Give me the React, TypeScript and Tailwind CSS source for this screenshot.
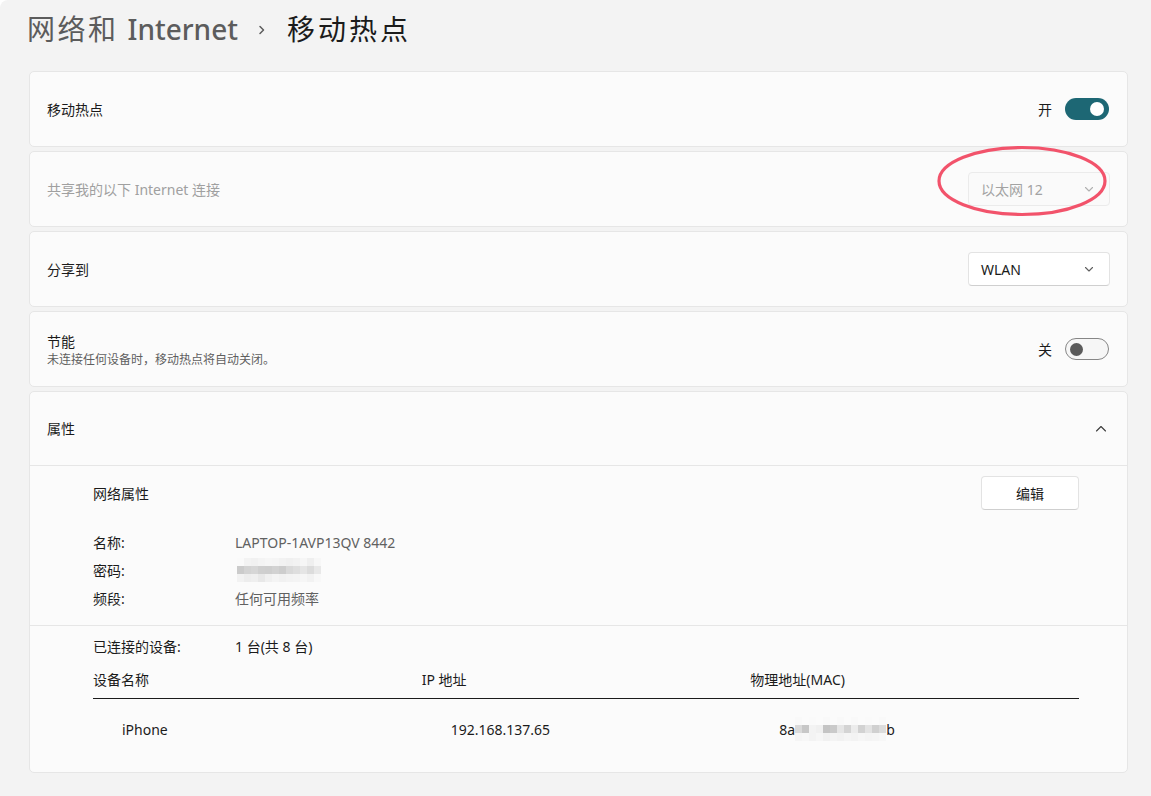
import React from 'react';

const font = { fontFamily: '"Segoe UI", "Noto Sans", "Noto Sans CJK SC", sans-serif' };

function Chevron({ up = false, className = '' }: { up?: boolean; className?: string }) {
  return (
    <svg width="12" height="12" viewBox="0 0 12 12" className={className} fill="none">
      <path
        d={up ? 'M1.5 8L6 3.5L10.5 8' : 'M2.5 4.5L6 8L9.5 4.5'}
        stroke="currentColor"
        strokeWidth="1.1"
        strokeLinecap="round"
        strokeLinejoin="round"
      />
    </svg>
  );
}

function Toggle({ on }: { on: boolean }) {
  if (on) {
    return (
      <div className="w-[44px] h-[22px] rounded-full bg-[#1d6774] flex items-center justify-end pr-[5px]">
        <div className="w-[14px] h-[14px] rounded-full bg-white" />
      </div>
    );
  }
  return (
    <div className="w-[44px] h-[22px] rounded-full border border-[#868686] bg-[#f6f6f6] flex items-center pl-[4px]">
      <div className="w-[13px] h-[13px] rounded-full bg-[#5a5a5a]" />
    </div>
  );
}

function Card({ children, className = '' }: { children: React.ReactNode; className?: string }) {
  return (
    <div className={`bg-[#fbfbfb] border border-[#e6e6e6] rounded-[5px] ${className}`}>{children}</div>
  );
}

// pixelated blur stand-in
function Pixels({ cells }: { cells: string[] }) {
  return (
    <div className="flex items-center">
      {cells.map((c, i) => (
        <div key={i} className="w-[7px] h-[8px]" style={{ background: c }} />
      ))}
    </div>
  );
}

export default function App() {
  return (
    <div style={font} className="w-[1151px] h-[796px] bg-white overflow-hidden">
      <div className="w-full h-full bg-[#f3f3f3] rounded-tl-[8px] pl-[29px] pr-[23px] flex flex-col">
        {/* Breadcrumb */}
        <div className="h-[71px] flex items-start pt-[9px] text-[28px] leading-[40px]">
          <span className="text-[#5c5c5c] -ml-[2px] flex">
            <span className="tracking-[2.5px]">网络和</span>
            <span className="font-medium ml-[9px]">Internet</span>
          </span>
          <span className="text-[#5c5c5c] ml-[20px] mr-[21px] flex items-center h-[40px] pt-[2px]">
            <svg width="8" height="10" viewBox="0 0 8 10" fill="none">
              <path d="M2 1.5L5.5 5L2 8.5" stroke="currentColor" strokeWidth="1.5" strokeLinecap="round" strokeLinejoin="round" />
            </svg>
          </span>
          <span className="text-[#1b1b1b] tracking-[3px]">移动热点</span>
        </div>

        <div className="flex flex-col gap-[4px] text-[14px] text-[#1b1b1b]">
          {/* Mobile hotspot */}
          <Card className="h-[76px] px-[17px] flex items-center justify-between">
            <span>移动热点</span>
            <div className="flex items-center gap-[13px] pr-[1px]">
              <span>开</span>
              <Toggle on />
            </div>
          </Card>

          {/* Share connection (disabled) */}
          <Card className="h-[76px] px-[17px] flex items-center justify-between relative">
            <span className="text-[#a0a0a0]">共享我的以下 Internet 连接</span>
            <div className="w-[142px] h-[34px] border border-[#ebebeb] rounded-[4px] bg-[#fafafa] flex items-center justify-between pl-[12px] pr-[14px] text-[#a3a3a3]">
              <span>以太网 12</span>
              <Chevron className="text-[#b0b0b0]" />
            </div>
            <svg
              className="absolute pointer-events-none"
              style={{ left: 906, top: -7 }}
              width="176"
              height="74"
              viewBox="0 0 176 74"
              fill="none"
            >
              <ellipse cx="86" cy="36" rx="83" ry="33.5" stroke="#f2536b" strokeWidth="3.2" />
            </svg>
          </Card>

          {/* Share to */}
          <Card className="h-[76px] px-[17px] flex items-center justify-between">
            <span>分享到</span>
            <div className="w-[142px] h-[34px] border border-[#e3e3e3] border-b-[#cfcfcf] rounded-[4px] bg-white flex items-center justify-between pl-[12px] pr-[14px]">
              <span>WLAN</span>
              <Chevron className="text-[#5f5f5f]" />
            </div>
          </Card>

          {/* Power saving */}
          <Card className="h-[76px] px-[17px] flex items-center justify-between">
            <div className="flex flex-col pt-[1px]">
              <span className="leading-[20px]">节能</span>
              <span className="text-[12px] leading-[16px] text-[#5f5f5f]">未连接任何设备时，移动热点将自动关闭。</span>
            </div>
            <div className="flex items-center gap-[13px] pr-[1px]">
              <span>关</span>
              <Toggle on={false} />
            </div>
          </Card>

          {/* Properties */}
          <Card className="h-[382px] flex flex-col">
            <div className="h-[74px] px-[17px] flex items-center justify-between border-b border-[#e6e6e6]">
              <span>属性</span>
              <Chevron up className="text-[#3b3b3b] mr-[3px]" />
            </div>

            <div className="pl-[63px] pr-[48px] pt-[10px] pb-[13px] border-b border-[#e6e6e6]">
              <div className="flex items-center justify-between h-[34px]">
                <span>网络属性</span>
                <button className="w-[98px] h-[34px] bg-white border border-[#e3e3e3] border-b-[#cfcfcf] rounded-[4px]">
                  编辑
                </button>
              </div>
              <div className="mt-[18px] flex flex-col">
                <div className="h-[28px] flex items-center">
                  <span className="w-[142px]">名称:</span>
                  <span className="text-[#616161]">LAPTOP-1AVP13QV 8442</span>
                </div>
                <div className="h-[28px] flex items-center">
                  <span className="w-[144px]">密码:</span>
                  <div className="flex flex-col gap-0 opacity-90">
                    <Pixels cells={['#fafafa', '#f3f3f3', '#f1f1f1', '#f4f4f4', '#f6f6f6', '#f5f5f5', '#f2f2f2', '#efefef', '#f2f2f2', '#f6f6f6', '#eeeeee', '#f7f7f7']} />
                    <Pixels cells={['#c6c6c6', '#cfcfcf', '#d2d2d2', '#cbcbcb', '#cacaca', '#cecece', '#c9c9c9', '#d6d6d6', '#dbdbdb', '#e3e3e3', '#d9d9d9', '#e7e7e7']} />
                    <Pixels cells={['#f2f2f2', '#ececec', '#eeeeee', '#e7e7e7', '#efefef', '#f4f4f4', '#f1f1f1', '#f3f3f3', '#f4f4f4', '#f6f6f6', '#f2f2f2', '#f8f8f8']} />
                  </div>
                </div>
                <div className="h-[28px] flex items-center">
                  <span className="w-[142px]">频段:</span>
                  <span className="text-[#616161]">任何可用频率</span>
                </div>
              </div>
            </div>

            <div className="pl-[63px] pr-[48px] pt-[6px]">
              <div className="h-[28px] flex items-center">
                <span className="w-[142px]">已连接的设备:</span>
                <span>1 台(共 8 台)</span>
              </div>
              <div className="grid grid-cols-3 h-[39px] items-center border-b border-[#1b1b1b] pt-[1px]">
                <span>设备名称</span>
                <span>IP 地址</span>
                <span>物理地址(MAC)</span>
              </div>
              <div className="grid grid-cols-3 h-[58px] items-center pt-[2px]">
                <span className="pl-[29px]">iPhone</span>
                <span className="pl-[29px]">192.168.137.65</span>
                <div className="pl-[29px] flex items-center">
                  <span>8a</span>
                  <div className="flex flex-col">
                    <Pixels cells={['#f9f9f9', '#fbfbfb', '#fafafa', '#fbfbfb', '#f9f9f9', '#fbfbfb', '#f9f9f9', '#fbfbfb', '#f9f9f9', '#fbfbfb', '#fafafa', '#fbfbfb', '#f9f9f9']} />
                    <Pixels cells={['#dadada', '#c7c7c7', '#f3f3f3', '#f0f0f0', '#c4c4c4', '#cacaca', '#e6e6e6', '#d4d4d4', '#ececec', '#d2d2d2', '#e3e3e3', '#d0d0d0', '#dcdcdc']} />
                    <Pixels cells={['#f5f5f5', '#f7f7f7', '#f3f3f3', '#f6f6f6', '#f1f1f1', '#f4f4f4', '#f2f2f2', '#f5f5f5', '#f3f3f3', '#f6f6f6', '#f4f4f4', '#f5f5f5', '#f7f7f7']} />
                  </div>
                  <span>b</span>
                </div>
              </div>
            </div>
          </Card>
        </div>
      </div>
    </div>
  );
}
